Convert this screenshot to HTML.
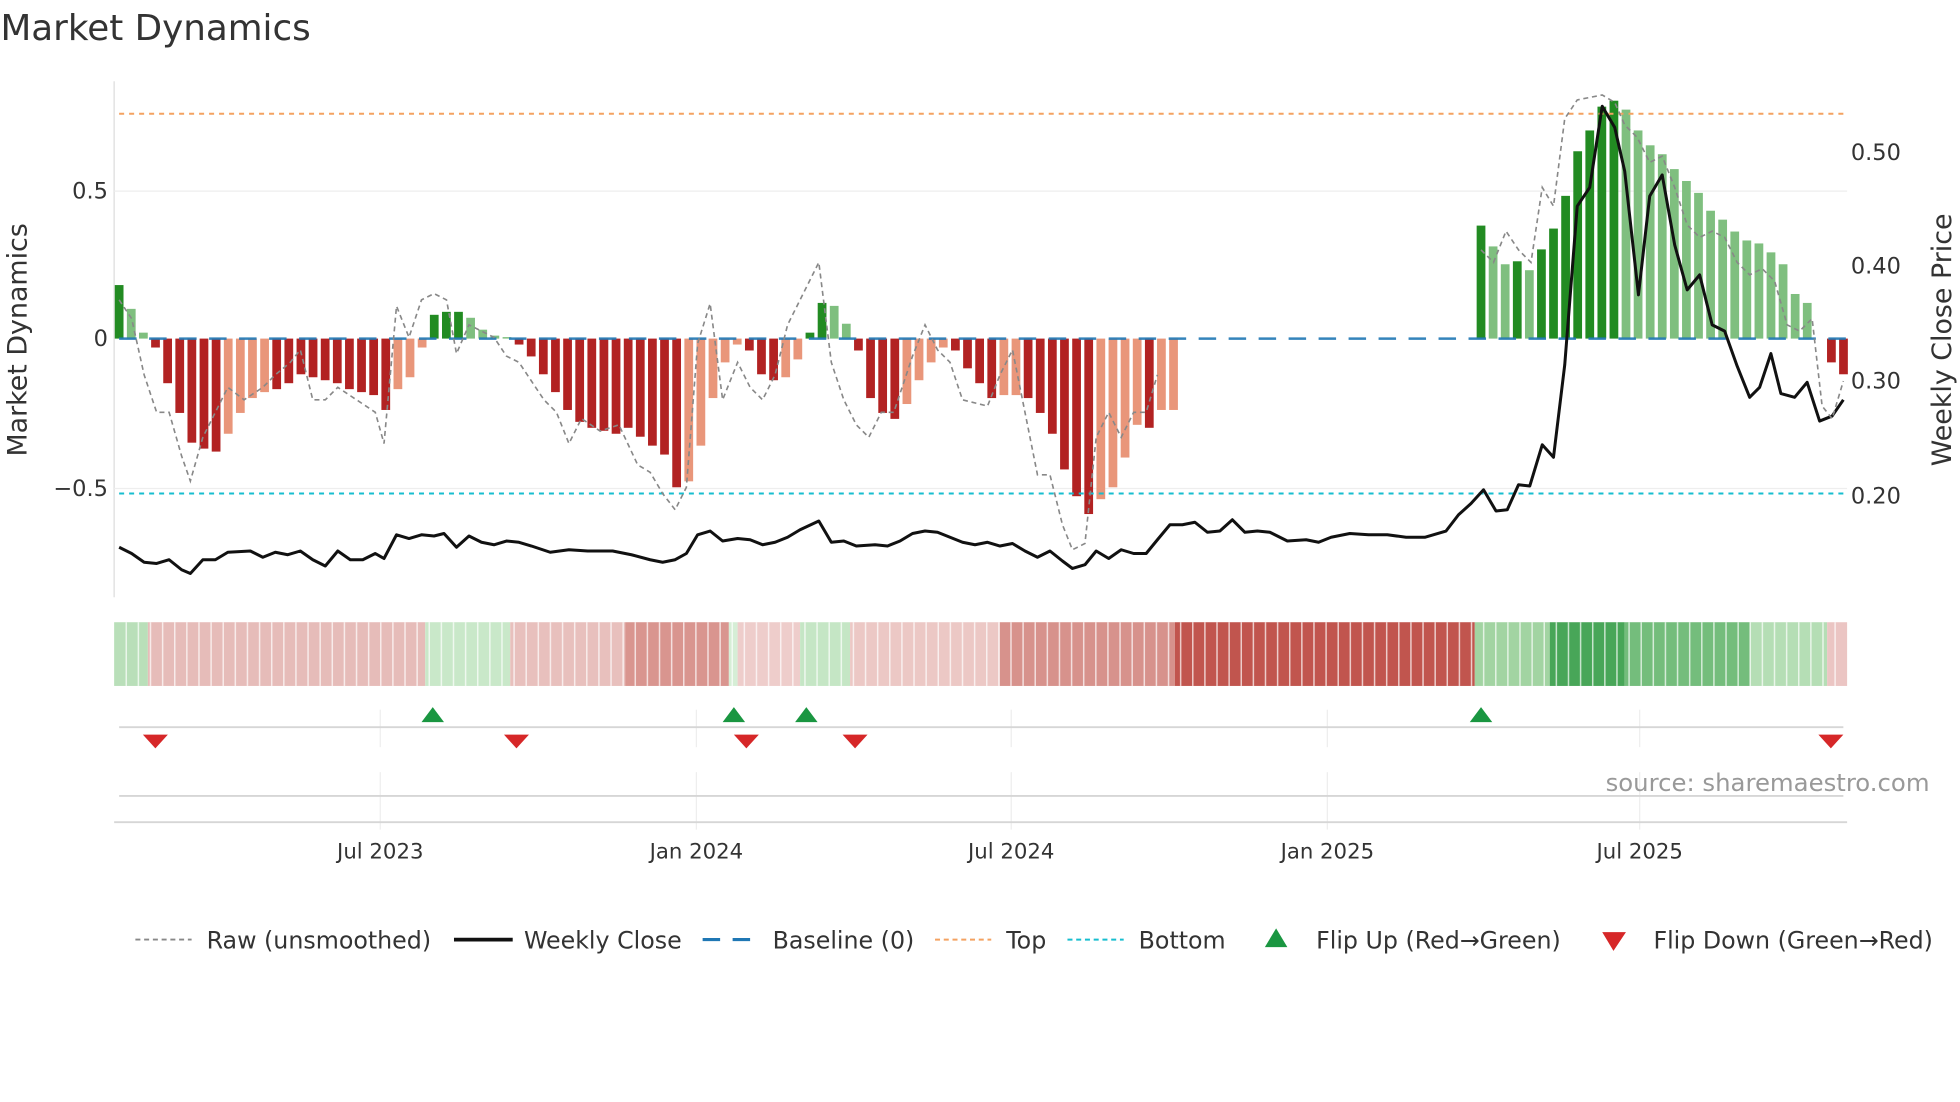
<!DOCTYPE html>
<html><head><meta charset="utf-8"><style>
html,body{margin:0;padding:0;background:#fff;}
svg{display:block;font-family:"DejaVu Sans","Liberation Sans",sans-serif;}
</style></head><body>
<svg id="s" width="1960" height="1102" viewBox="0 0 1568 882" xmlns="http://www.w3.org/2000/svg">
<rect width="1568" height="882" fill="#fff"/>
<text x="0" y="32" font-size="28.6" fill="#333">Market Dynamics</text>
<g id="grid"></g>
<line x1="91" y1="65" x2="91" y2="478" stroke="#ddd" stroke-width="1"/>
<line x1="91" y1="153" x2="1478" y2="153" stroke="#eee"/>
<line x1="91" y1="391" x2="1478" y2="391" stroke="#eee"/>
<g id="bars"></g>
<line x1="95" y1="271" x2="1478" y2="271" stroke="#1f77b4" stroke-width="2" stroke-dasharray="14,10" opacity="0.9"/>
<line x1="95" y1="91" x2="1478" y2="91" stroke="#f4a261" stroke-width="1.6" stroke-dasharray="4,4"/>
<line x1="95" y1="395" x2="1478" y2="395" stroke="#17becf" stroke-width="1.6" stroke-dasharray="4,4"/>
<polyline id="raw" fill="none" stroke="#888" stroke-width="1.3" stroke-dasharray="4,3"/>
<polyline id="price" fill="none" stroke="#111" stroke-width="2.4" stroke-linejoin="round"/>
<g font-size="18" fill="#333">
<text x="86" y="159" text-anchor="end">0.5</text>
<text x="86" y="277" text-anchor="end">0</text>
<text x="86" y="397" text-anchor="end">−0.5</text>
<text x="1481" y="128">0.50</text>
<text x="1481" y="219">0.40</text>
<text x="1481" y="311">0.30</text>
<text x="1481" y="403">0.20</text>
<text transform="translate(21,272) rotate(-90)" text-anchor="middle" font-size="21.5">Market Dynamics</text>
<text transform="translate(1561,272) rotate(-90)" text-anchor="middle" font-size="21.5">Weekly Close Price</text>
</g>
<g id="heat"></g>
<line x1="95" y1="582" x2="1475" y2="582" stroke="#d6d6d6" stroke-width="1.5"/>
<line x1="95" y1="637" x2="1475" y2="637" stroke="#d6d6d6" stroke-width="1.5"/>
<line x1="91" y1="658" x2="1478" y2="658" stroke="#d6d6d6" stroke-width="1.5"/>
<g id="marks"></g>
<text x="1544" y="633" text-anchor="end" font-size="19.5" fill="#999">source: sharemaestro.com</text>
<g font-size="17" fill="#333" text-anchor="middle">
<text x="304" y="687">Jul 2023</text><text x="557" y="687">Jan 2024</text><text x="809" y="687">Jul 2024</text><text x="1062" y="687">Jan 2025</text><text x="1312" y="687">Jul 2025</text>
</g>
<g font-size="19" fill="#333">
<line x1="108" y1="752" x2="153" y2="752" stroke="#888" stroke-width="1.5" stroke-dasharray="4,3"/>
<text x="165" y="759">Raw (unsmoothed)</text>
<line x1="363" y1="752" x2="410" y2="752" stroke="#111" stroke-width="3"/>
<text x="419" y="759">Weekly Close</text>
<line x1="562" y1="752" x2="607" y2="752" stroke="#1f77b4" stroke-width="2.5" stroke-dasharray="14,10"/>
<text x="618" y="759">Baseline (0)</text>
<line x1="748" y1="752" x2="793" y2="752" stroke="#f4a261" stroke-width="1.6" stroke-dasharray="4,3"/>
<text x="805" y="759">Top</text>
<line x1="854" y1="752" x2="899" y2="752" stroke="#17becf" stroke-width="1.6" stroke-dasharray="4,3"/>
<text x="911" y="759">Bottom</text>
<polygon points="1012,758 1021,743 1030,758" fill="#1a9641"/>
<text x="1053" y="759">Flip Up (Red→Green)</text>
<polygon points="1282,746 1301,746 1291,761" fill="#d62728"/>
<text x="1323" y="759">Flip Down (Green→Red)</text>
</g>
</svg>
<script>
var NS="http://www.w3.org/2000/svg";
function el(p,t,a){var e=document.createElementNS(NS,t);for(var k in a)e.setAttribute(k,a[k]);document.getElementById(p).appendChild(e);return e;}
[304,557,809,1062,1312].forEach(function(x){el('grid','line',{x1:x,y1:568,x2:x,y2:598,stroke:'#eee'});el('grid','line',{x1:x,y1:618,x2:x,y2:664,stroke:'#eee'});});
var v=[0.18,0.1,0.02,-0.03,-0.15,-0.25,-0.35,-0.37,-0.38,-0.32,-0.25,-0.2,-0.18,-0.17,-0.15,-0.12,-0.13,-0.14,-0.15,-0.17,-0.18,-0.19,-0.24,-0.17,-0.13,-0.03,0.08,0.09,0.09,0.07,0.03,0.01,0.005,-0.02,-0.06,-0.12,-0.18,-0.24,-0.28,-0.3,-0.31,-0.32,-0.3,-0.33,-0.36,-0.39,-0.5,-0.48,-0.36,-0.2,-0.08,-0.02,-0.04,-0.12,-0.14,-0.13,-0.07,0.02,0.12,0.11,0.05,-0.04,-0.2,-0.25,-0.27,-0.22,-0.14,-0.08,-0.03,-0.04,-0.1,-0.15,-0.2,-0.19,-0.19,-0.2,-0.25,-0.32,-0.44,-0.53,-0.59,-0.54,-0.5,-0.4,-0.29,-0.3,-0.24,-0.24];
var dark=[1,0,0,1,1,1,1,1,1,0,0,0,0,1,1,1,1,1,1,1,1,1,1,0,0,0,1,1,1,0,0,0,0,1,1,1,1,1,1,1,1,1,1,1,1,1,1,0,0,0,0,0,1,1,1,0,0,1,1,0,0,1,1,1,1,0,0,0,0,1,1,1,1,0,0,1,1,1,1,1,1,0,0,0,0,1,0,0];
var g2=[0.38,0.31,0.25,0.26,0.23,0.3,0.37,0.48,0.63,0.7,0.78,0.8,0.77,0.7,0.65,0.62,0.57,0.53,0.49,0.43,0.4,0.36,0.33,0.32,0.29,0.25,0.15,0.12,0,-0.08,-0.12];
var gd=[1,0,0,1,0,1,1,1,1,1,1,1,0,0,0,0,0,0,0,0,0,0,0,0,0,0,0,0,0,1,1];
var step=9.7,w=7;
function bar(x,val,d){var y0=271,h=val*238;var c=val>=0?(d?'#228b22':'#7fbf7f'):(d?'#b22222':'#e9967a');
 el('bars','rect',{x:x-w/2,y:val>=0?y0-h:y0,width:w,height:Math.abs(h),fill:c});}
for(var i=0;i<v.length;i++)bar(95+i*step,v[i],dark[i]);
for(var i=0;i<g2.length;i++)if(g2[i]!=0)bar(1185+i*9.67,g2[i],gd[i]);
var p=[95,438,105,443,115,450,125,451,135,448,145,456,152,459,162,448,172,448,182,442,200,441,210,446,220,442,230,444,240,441,250,448,260,453,270,441,280,448,290,448,300,443,307,447,317,428,327,431,337,428,347,429,355,427,365,438,375,429,385,434,395,436,405,433,415,434,425,437,440,442,455,440,470,441,490,441,505,444,520,448,530,450,540,448,549,443,558,428,568,425,578,433,590,431,600,432,610,436,620,434,630,430,640,424,655,417,665,434,675,433,685,437,700,436,710,437,720,433,730,427,740,425,750,426,760,430,770,434,780,436,790,434,800,437,810,435,820,441,830,446,840,441,850,449,858,455,868,452,877,441,887,447,897,440,907,443,917,443,926,432,936,420,946,420,956,418,966,426,976,425,986,416,996,426,1006,425,1016,426,1030,433,1045,432,1055,434,1065,430,1080,427,1095,428,1110,428,1125,430,1140,430,1157,425,1167,412,1177,403,1187,392,1197,409,1206,408,1215,388,1224,389,1234,356,1243,366,1252,292,1262,165,1272,150,1282,85,1292,102,1300,137,1311,236,1320,157,1330,140,1340,196,1350,232,1360,220,1370,260,1380,265,1390,293,1400,318,1408,310,1417,283,1425,315,1436,318,1446,306,1456,337,1466,333,1475,320];
var r=[95,240,105,255,115,300,125,330,135,330,145,365,152,385,162,350,172,330,182,310,195,320,210,310,220,300,232,290,240,280,250,320,260,320,270,310,285,320,300,330,307,355,317,245,327,270,337,240,347,235,357,240,365,283,375,260,385,265,395,270,405,285,415,290,425,305,435,320,445,330,455,355,465,335,480,345,495,340,510,372,520,378,530,395,540,408,549,390,558,275,568,243,578,320,590,290,600,310,610,320,620,300,630,260,640,240,655,210,665,290,675,320,685,340,695,350,705,330,715,330,730,285,740,260,750,280,760,290,770,320,790,325,800,300,810,280,820,330,830,380,840,380,850,420,858,440,868,435,877,350,887,330,897,350,907,330,917,330,926,300];
var r2=[1185,200,1195,210,1205,185,1215,200,1225,210,1234,150,1243,165,1252,95,1262,80,1272,78,1282,76,1292,82,1300,100,1310,110,1320,130,1330,125,1340,150,1350,180,1360,190,1370,185,1380,190,1390,210,1400,220,1410,215,1420,225,1430,260,1440,265,1450,255,1458,325,1466,335,1475,305];
function pts(a){var s='';for(var i=0;i<a.length;i+=2)s+=a[i]+','+a[i+1]+' ';return s;}
document.getElementById('price').setAttribute('points',pts(p));
document.getElementById('raw').setAttribute('points',pts(r));
var rl=el('bars','polyline',{fill:'none',stroke:'#888','stroke-width':1.3,'stroke-dasharray':'4,3',points:pts(r2)});
document.getElementById('s').appendChild(rl);
var segs=[[91,118,'#b9dfb9'],[118,340,'#e6bcb9'],[340,408,'#c9e8c9'],[408,500,'#e8c0bd'],[500,583,'#d9958f'],[583,590,'#d6eed6'],[590,640,'#eecdcb'],[640,680,'#c5e6c5'],[680,800,'#ecc8c5'],[800,940,'#d7928c'],[940,1180,'#c1554e'],[1180,1240,'#a2d4a2'],[1240,1300,'#48a658'],[1300,1400,'#74bd7c'],[1400,1462,'#b5deb5'],[1462,1478,'#ebc5c3']];
segs.forEach(function(s){el('heat','rect',{x:s[0],y:498,width:s[1]-s[0],height:51,fill:s[2]});});
for(var x=91+9.7;x<1478;x+=9.7)el('heat','rect',{x:x-0.6,y:498,width:1.2,height:51,fill:'#fff',opacity:0.7});
[346,587,645,1185].forEach(function(x){el('marks','polygon',{points:(x-9)+',578 '+x+',566 '+(x+9)+',578',fill:'#1a9641'});});
[124,413,597,684,1465].forEach(function(x){el('marks','polygon',{points:(x-10)+',588 '+(x+10)+',588 '+x+',599',fill:'#d62728'});});
</script>
</body></html>
